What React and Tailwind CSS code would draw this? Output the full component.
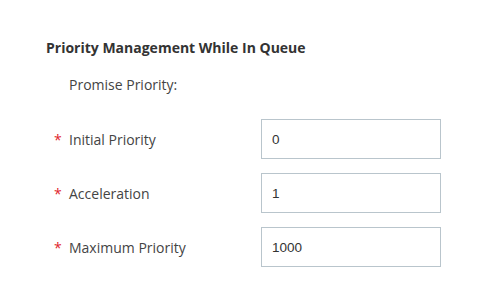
import React from "react";

const fields = [
  { label: "Initial Priority", value: "0" },
  { label: "Acceleration", value: "1" },
  { label: "Maximum Priority", value: "1000" },
];

const App = () => {
  return (
    <div className="w-[493px] h-[295px] bg-white pt-[38px] pl-[46px] font-['Open_Sans',sans-serif]">
      <h2 className="text-[14px] leading-[20px] font-bold text-[#333]">
        Priority Management While In Queue
      </h2>
      <p className="mt-[17px] pl-[23px] text-[14px] leading-[20px] text-[#444]">
        Promise Priority:
      </p>
      <div className="mt-[24px] flex flex-col gap-[14px]">
        {fields.map((f) => (
          <div key={f.label} className="flex items-center h-[40px]">
            <div className="w-[215px] flex items-center pl-[8px] text-[14px] text-[#444]">
              <span className="w-[15px] text-[#e0262c]">*</span>
              <span>{f.label}</span>
            </div>
            <input
              readOnly
              value={f.value}
              className="w-[180px] h-[40px] border border-[#b9c5cc] px-[10px] text-[13.5px] text-[#333] font-['Liberation_Sans',sans-serif] outline-none"
            />
          </div>
        ))}
      </div>
    </div>
  );
};

export default App;
